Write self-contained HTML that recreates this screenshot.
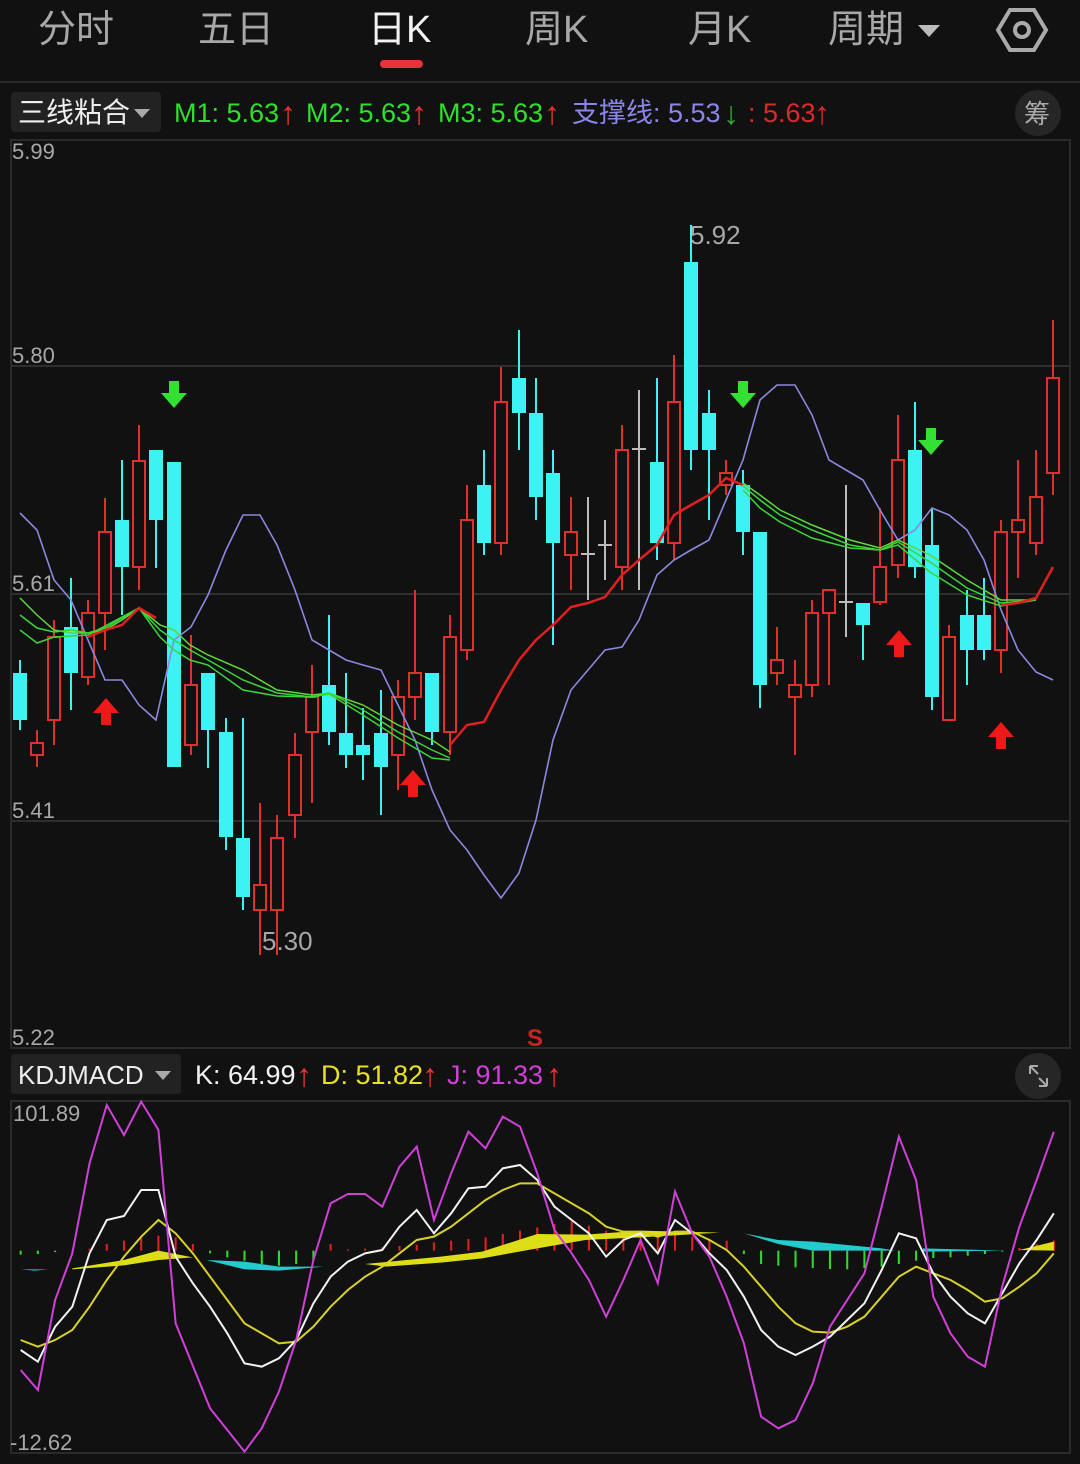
<!DOCTYPE html>
<html><head><meta charset="utf-8"><style>
body{margin:0;background:#111;width:1080px;height:1464px;overflow:hidden;font-family:"Liberation Sans","Noto Sans CJK SC",sans-serif;}
svg{display:block}
</style></head><body>
<svg id="s" width="1080" height="1464" xmlns="http://www.w3.org/2000/svg" font-family="Liberation Sans, Noto Sans CJK SC, sans-serif">
<rect width="1080" height="1464" fill="#111"/>
<g font-size="38" fill="#a8a8a8">
<text x="38" y="42">分时</text>
<text x="198" y="42">五日</text>
<text x="368" y="42" fill="#f2f2f2">日K</text>
<text x="525" y="42">周K</text>
<text x="688" y="42">月K</text>
<text x="828" y="42">周期</text>
</g>
<path d="M918 25h22l-11 12z" fill="#bbb"/>
<path d="M1010 10l24 0 12 20-12 20-24 0-12-20z" fill="none" stroke="#aaa" stroke-width="4"/>
<circle cx="1022" cy="30" r="7" fill="none" stroke="#aaa" stroke-width="4"/>
<rect x="380" y="60" width="43" height="8" rx="4" fill="#e8333a"/>
<line x1="0" y1="82" x2="1080" y2="82" stroke="#2a2a2a" stroke-width="2"/>
<rect x="11" y="92" width="150" height="40" rx="4" fill="#222"/>
<text x="18" y="122" font-size="28" fill="#eee">三线粘合</text>
<path d="M134 109h16l-8 9z" fill="#aaa"/>
<g font-size="27">
<text x="174" y="122" fill="#2ee02e">M1: 5.63</text><text x="280" y="124" fill="#e33" font-size="32">↑</text>
<text x="306" y="122" fill="#2ee02e">M2: 5.63</text><text x="411" y="124" fill="#e33" font-size="32">↑</text>
<text x="438" y="122" fill="#2ee02e">M3: 5.63</text><text x="544" y="124" fill="#e33" font-size="32">↑</text>
<text x="572" y="122" fill="#8a86e8">支撑线: 5.53</text><text x="723" y="124" fill="#3a3" font-size="32">↓</text>
<text x="748" y="122" fill="#e02828">: 5.63</text><text x="814" y="124" fill="#e02828" font-size="32">↑</text>
</g>
<circle cx="1038" cy="113" r="23" fill="#262626"/>
<text x="1024" y="123" font-size="26" fill="#aaa">筹</text>
<rect x="11" y="140" width="1059" height="908" fill="none" stroke="#2a2a2a" stroke-width="2"/>
<g stroke="#2e2e2e" stroke-width="2"><line x1="11" y1="366" x2="1070" y2="366"/><line x1="11" y1="594" x2="1070" y2="594"/><line x1="11" y1="821" x2="1070" y2="821"/></g>
<g font-size="22" fill="#a8a8a8">
<text x="12" y="159">5.99</text><text x="12" y="363">5.80</text><text x="12" y="591">5.61</text><text x="12" y="818">5.41</text><text x="12" y="1045">5.22</text>
<text x="262" y="950" font-size="26">5.30</text><text x="690" y="244" font-size="26">5.92</text>
</g>
<text x="527" y="1046" font-size="24" fill="#c22" font-weight="bold">S</text>
<g id="candles"></g>
<g id="lines" fill="none"></g>
<rect x="11" y="1054" width="170" height="40" rx="4" fill="#222"/>
<text x="18" y="1084" font-size="26" fill="#eee">KDJMACD</text>
<path d="M155 1071h16l-8 9z" fill="#aaa"/>
<g font-size="27">
<text x="195" y="1084" fill="#f2f2f2">K: 64.99</text><text x="296" y="1086" fill="#e33" font-size="32">↑</text>
<text x="321" y="1084" fill="#e8e020">D: 51.82</text><text x="422" y="1086" fill="#e33" font-size="32">↑</text>
<text x="447" y="1084" fill="#d040d8">J: 91.33</text><text x="546" y="1086" fill="#e33" font-size="32">↑</text>
</g>
<circle cx="1038" cy="1076" r="23" fill="#262626"/>
<path d="M1030 1066v8M1030 1066h8M1030 1066l8 8M1047 1086v-8M1047 1086h-8M1047 1086l-8-8" stroke="#aaa" stroke-width="2"/>
<rect x="11" y="1101" width="1059" height="352" fill="none" stroke="#2a2a2a" stroke-width="2"/>
<text x="13" y="1121" font-size="22" fill="#a8a8a8">101.89</text>
<text x="10" y="1450" font-size="22" fill="#a8a8a8">-12.62</text>
<g id="kdj" transform="translate(0,1040) scale(0.68878,0.33333)"></g>
</svg>
<script>
var NS="http://www.w3.org/2000/svg";
function el(p,t,a){var e=document.createElementNS(NS,t);for(var k in a)e.setAttribute(k,a[k]);p.appendChild(e);return e;}
var C=[[20,'c',660,673,720,730],[37,'r',730,743,755,767],[54,'r',620,637,720,745],[71,'c',578,627,673,710],[88,'r',600,613,677,685],[105,'r',498,532,613,650],[122,'c',460,520,567,615],[139,'r',425,461,567,590],[156,'c',450,450,520,568],[174,'c',462,462,767,767],[191,'r',635,685,745,755],[208,'c',673,673,730,768],[226,'c',718,732,837,850],[243,'c',718,838,897,910],[260,'r',803,885,910,955],[277,'r',815,838,910,955],[295,'r',733,755,815,838],[312,'r',665,697,732,803],[329,'c',615,685,732,745],[346,'c',673,733,755,768],[363,'c',708,745,755,780],[381,'c',690,733,767,815],[398,'r',680,697,755,790],[415,'r',590,673,697,720],[432,'c',673,673,732,745],[450,'r',615,637,732,755],[467,'r',485,520,650,660],[484,'c',450,485,543,555],[501,'r',367,402,543,555],[519,'c',330,378,413,450],[536,'c',378,413,497,520],[553,'c',450,473,543,645],[571,'r',497,532,555,590],[588,'g',497,554,556,600],[605,'g',520,545,555,580],[622,'r',425,450,567,590],[639,'g',390,449,451,590],[657,'c',378,462,543,560],[674,'r',355,402,543,560],[691,'c',225,262,450,470],[709,'c',390,413,450,520],[726,'r',460,473,485,495],[743,'c',470,485,532,555],[760,'c',532,532,685,708],[777,'r',627,660,673,685],[795,'r',660,685,697,755],[812,'r',600,613,685,697],[829,'r',590,590,613,685],[846,'g',485,602,604,637],[863,'c',603,603,625,660],[880,'r',508,567,602,605],[898,'r',415,460,565,578],[915,'c',402,450,567,578],[932,'c',508,545,697,710],[949,'r',625,637,720,720],[967,'c',590,615,650,685],[984,'c',578,615,650,660],[1001,'r',520,532,650,673],[1018,'r',460,520,532,578],[1036,'r',450,497,543,555],[1053,'r',320,378,473,495]];
var g=document.getElementById('candles');
C.forEach(function(c){var x=c[0],col=c[1]=='r'?'#e0302c':(c[1]=='c'?'#3cf2f2':'#bbbbbb');
el(g,'line',{x1:x,y1:c[2],x2:x,y2:c[5],stroke:col,'stroke-width':2});
if(c[1]=='r'){el(g,'rect',{x:x-6,y:c[3],width:12,height:Math.max(c[4]-c[3],1),fill:'#111',stroke:col,'stroke-width':2});}
else if(c[1]=='c'){el(g,'rect',{x:x-7,y:c[3],width:14,height:Math.max(c[4]-c[3],2),fill:col});}
else{el(g,'line',{x1:x-7,y1:c[3],x2:x+7,y2:c[3],stroke:col,'stroke-width':2});}
});
var L=document.getElementById('lines');
function pl(p,pts,col,w){el(p,'polyline',{points:pts,stroke:col,'stroke-width':w||1.5,fill:'none'});}
pl(L,"20,513 37,530 54,580 71,600 88,640 105,680 122,680 139,705 156,720 174,640 191,627 208,595 226,550 243,515 260,515 277,545 295,590 312,640 329,650 346,660 363,665 381,670 398,705 415,740 432,790 450,830 467,850 484,875 501,898 519,873 536,820 553,740 571,690 588,670 605,650 622,647 639,620 657,575 674,560 691,550 709,540 726,500 743,460 760,400 777,385 795,385 812,415 829,460 846,470 863,480 880,510 898,540 915,530 932,508 949,515 967,530 984,560 1001,610 1018,650 1036,672 1053,680","#8c88e0",1.6);
var gr="#3ad63a";
pl(L,"20,598 37,615 54,630 71,633 88,633 105,630 122,620 139,608 160,625 174,630 190,645 208,655 243,670 277,690 312,695 329,693 363,705 398,725 432,740 450,752","#5ed83a",1.5);
pl(L,"20,615 37,628 54,632 71,630 88,633 105,628 122,618 139,608 160,630 174,640 190,650 208,660 243,680 277,693 312,697 329,693 363,710 398,732 432,750 450,758",gr,1.5);
pl(L,"20,630 37,643 54,637 71,636 88,635 139,608 160,637 174,650 190,660 208,665 243,690 277,696 312,697 329,694 363,715 398,738 432,758 450,760",gr,1.5);
pl(L,"743,483 760,495 780,510 812,525 850,540 880,548 898,540 930,555 967,580 1001,600 1036,600","#5ed83a",1.5);
pl(L,"743,486 760,500 780,515 812,530 850,545 880,550 898,542 930,562 967,588 1001,603 1036,600",gr,1.5);
pl(L,"743,490 760,508 780,522 812,538 850,548 880,550 898,545 930,572 967,595 1001,606 1036,600",gr,1.5);
pl(L,"88,637 105,630 122,625 139,608 156,618","#e02020",2.5);
pl(L,"450,745 467,725 484,722 501,690 519,660 536,640 553,625 571,607 588,603 605,597 622,575 639,560 657,545 674,515 691,505 709,495 726,478 743,485","#e02020",2.5);
pl(L,"1001,605 1018,603 1036,598 1053,567","#e02020",2.5);
function arrow(x,y,up,col){var d=up?"M"+x+" "+y+"l-13 15h8v12h10v-12h8z":"M"+x+" "+y+"l-13-15h8v-12h10v12h8z";el(L,'path',{d:d,fill:col});}
arrow(174,408,false,'#33e033');arrow(743,408,false,'#33e033');arrow(931,455,false,'#33e033');
arrow(106,698,true,'#f01818');arrow(413,770,true,'#f01818');arrow(899,630,true,'#f01818');arrow(1001,722,true,'#f01818');
var K=document.getElementById('kdj');
var xs=[];for(var i=30;i<=1530;i+=25)xs.push(i);
var hl=[12,10,4,2,6,20,30,38,45,40,20,8,20,30,40,45,40,30,20,4,6,10,14,18,25,30,35,40,50,60,70,80,88,75,60,50,45,40,48,42,35,30,10,40,45,50,52,55,56,52,48,40,30,22,20,15,10,3,8,20,30];
xs.forEach(function(x,i){var h=hl[i]||10;var red=(x>=130&&x<=280)||(x>=480&&x<=1055)||x>=1480;
el(K,'line',{x1:x,y1:red?632-h:632,x2:x,y2:red?632:632+h,stroke:red?'#e02020':'#30d830','stroke-width':3});});
el(K,'polygon',{points:"105,685 180,660 230,632 280,652 230,660 180,676 105,688",fill:'#dede18'});
el(K,'polygon',{points:"30,688 70,688 50,692",fill:'#22cccc'});
el(K,'polygon',{points:"300,660 355,665 405,680 470,680 405,692 355,688",fill:'#22cccc'});
el(K,'polygon',{points:"530,672 640,650 700,635 780,582 850,584 930,572 1045,578 930,592 850,600 780,625 700,655 640,668 560,680",fill:'#dede18'});
el(K,'polygon',{points:"1080,580 1130,600 1180,605 1280,625 1300,632 1180,632 1130,612",fill:'#22cccc'});
el(K,'polygon',{points:"1340,625 1460,632 1340,635",fill:'#22cccc'});
el(K,'polygon',{points:"1480,630 1530,605 1530,632",fill:'#dede18'});
function kp(pts,col){el(K,'polyline',{points:pts,stroke:col,'stroke-width':2,fill:'none','vector-effect':'non-scaling-stroke'});}
kp("30,900 55,920 80,900 105,870 130,800 155,720 180,650 205,590 230,540 255,580 280,640 305,710 330,780 355,850 380,880 405,910 430,905 455,860 480,800 505,750 530,710 555,680 580,640 605,600 630,590 655,560 680,520 705,480 730,450 755,430 780,430 805,460 830,490 855,520 880,560 905,575 930,575 955,590 980,575 1005,575 1030,600 1055,630 1080,680 1105,740 1130,800 1155,850 1180,875 1205,878 1230,860 1255,830 1280,770 1305,710 1330,680 1355,700 1380,720 1405,750 1430,785 1455,775 1480,740 1505,700 1530,640","#d8d028");
kp("30,930 55,965 80,860 105,800 130,640 155,540 180,528 205,450 230,450 255,650 280,730 305,800 330,880 355,970 380,980 405,955 430,900 455,790 480,710 505,665 530,640 555,630 580,560 605,510 630,580 655,520 680,445 705,440 730,385 755,375 780,420 805,500 830,540 855,580 880,650 905,600 930,580 955,640 980,540 1005,580 1030,640 1055,690 1080,770 1105,870 1130,920 1155,945 1180,920 1205,890 1230,840 1255,790 1280,690 1305,580 1330,595 1355,700 1380,770 1405,820 1430,850 1455,760 1480,670 1505,600 1530,520","#f2f2f2");
kp("30,990 55,1050 80,780 105,640 130,370 155,195 180,285 205,185 230,270 255,850 305,1105 355,1235 380,1165 405,1055 430,900 455,660 480,490 505,462 530,462 555,500 580,380 605,320 630,540 655,400 680,275 705,325 730,230 755,260 780,400 805,570 830,640 855,720 880,830 905,720 930,600 955,730 980,455 1005,580 1030,650 1055,770 1080,910 1105,1130 1130,1165 1155,1140 1180,1030 1205,860 1230,780 1255,700 1280,500 1305,290 1330,420 1355,770 1380,880 1405,950 1430,980 1455,740 1480,560 1505,420 1530,275","#d040d8");
</script>
</body></html>
